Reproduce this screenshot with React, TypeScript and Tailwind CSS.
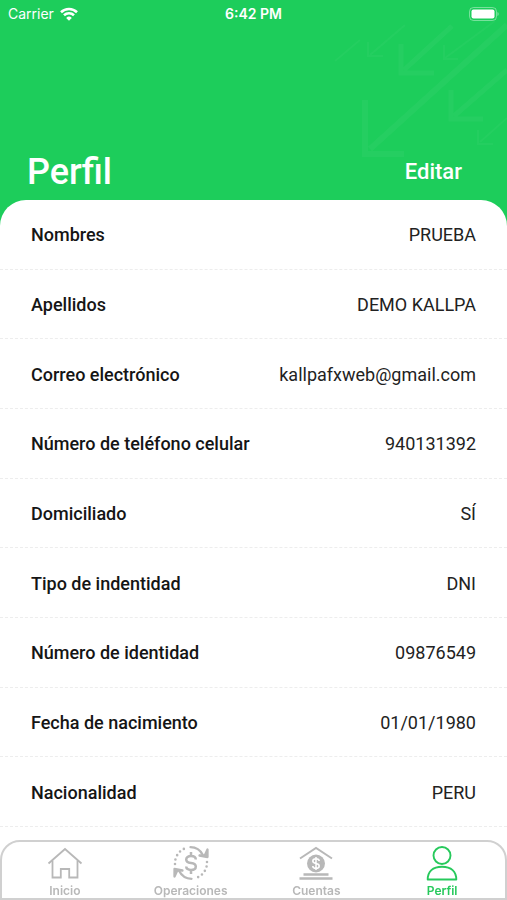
import React from 'react';

const fields = [
  { label: 'Nombres', value: 'PRUEBA' },
  { label: 'Apellidos', value: 'DEMO KALLPA' },
  { label: 'Correo electrónico', value: 'kallpafxweb@gmail.com' },
  { label: 'Número de teléfono celular', value: '940131392' },
  { label: 'Domiciliado', value: 'SÍ' },
  { label: 'Tipo de indentidad', value: 'DNI' },
  { label: 'Número de identidad', value: '09876549' },
  { label: 'Fecha de nacimiento', value: '01/01/1980' },
  { label: 'Nacionalidad', value: 'PERU' },
];

function HomeIcon() {
  return (
    <svg viewBox="0 0 36 36" className="w-9 h-9" fill="none" stroke="currentColor" strokeWidth="1.8" aria-hidden="true">
      <path d="M1.500 18.500 18 4l16.500 14.500" />
      <path d="M5.500 15.500V32.500h8.300V24h8.400v8.500h8.300V15.500" />
    </svg>
  );
}

function ExchangeIcon() {
  return (
    <svg viewBox="0 0 36 36" className="w-9 h-9" fill="none" stroke="currentColor" strokeWidth="2.300" strokeLinecap="round" strokeLinejoin="round" aria-hidden="true">
      <path d="M17.500 2.200c5 0 9.800 2.800 12.500 8" />
      <path d="M34.500 4.500v7.500l-8-1.500 5 .5z" fill="currentColor" />
      <path d="M18.500 33.800c-5 0-9.800-2.800-12.500-8" />
      <path d="M1.500 31.500V24l8 1.500-5-.5z" fill="currentColor" />
      <path d="M2 19a16 16 0 0 1 11-16" strokeDasharray="0 4.600" strokeWidth="2.600" />
      <path d="M34 17a16 16 0 0 1-11 16" strokeDasharray="0 4.600" strokeWidth="2.600" />
      <path d="M18 7v4M18 25v4M22.800 14.500c0-2.200-2-3.500-4.800-3.500s-4.800 1.300-4.800 3.500 2 3.200 4.800 3.500 4.800 1.300 4.800 3.500-2 3.500-4.800 3.500-4.800-1.300-4.800-3.500" strokeWidth="2.500" strokeLinecap="butt" />
    </svg>
  );
}

function BankIcon() {
  return (
    <svg viewBox="0 0 36 36" className="w-9 h-9" fill="none" stroke="currentColor" strokeWidth="2" aria-hidden="true">
      <path d="M2 13.500 18 3l16 10.500" />
      <circle cx="18" cy="18.500" r="9" fill="currentColor" stroke="none" />
      <path d="M5.500 29.500h25M1.500 33.500h33" strokeWidth="2.400" />
      <path d="M18 12v13M21.200 16c0-1.500-1.400-2.300-3.200-2.300s-3.200.8-3.200 2.400 1.400 2.100 3.200 2.400 3.200.9 3.200 2.400-1.400 2.400-3.200 2.400-3.200-.9-3.200-2.400" stroke="white" strokeWidth="1.500" />
    </svg>
  );
}

function UserIcon() {
  return (
    <svg viewBox="0 0 36 36" className="w-9 h-9" fill="none" stroke="currentColor" strokeWidth="1.900" aria-hidden="true">
      <circle cx="18" cy="10.500" r="8.500" />
      <path d="M3.700 34.500c0-8 5-12.800 14.300-12.800s14.300 4.800 14.300 12.800z" strokeLinejoin="round" />
    </svg>
  );
}

const tabs = [
  { label: 'Inicio', icon: HomeIcon, active: false },
  { label: 'Operaciones', icon: ExchangeIcon, active: false },
  { label: 'Cuentas', icon: BankIcon, active: false },
  { label: 'Perfil', icon: UserIcon, active: true },
];

function StatusBar() {
  return (
    <div className="relative grid grid-cols-3 items-center h-7 px-2 text-white">
      <div className="flex items-center gap-1.5 font-['Inter',sans-serif] text-sm">
        <span>Carrier</span>
        <svg viewBox="0 0 18 14" className="w-[18px] h-3.5" fill="none" stroke="currentColor" strokeWidth="2.600" aria-hidden="true">
          <path d="M1 5.200a11.500 11.500 0 0 1 16 0" />
          <path d="M4 8.300a7.200 7.200 0 0 1 10 0" />
          <path d="m9 13.800-2.800-2.900a4 4 0 0 1 5.600 0z" fill="currentColor" stroke="none" />
        </svg>
      </div>
      <span className="text-center font-['Inter',sans-serif] text-sm font-semibold">6:42 PM</span>
      <svg viewBox="0 0 30 14" className="w-[30px] h-3.5 justify-self-end" aria-hidden="true">
        <rect x=".5" y=".5" width="27" height="13" rx="4" fill="none" stroke="white" strokeOpacity=".4" />
        <rect x="2.500" y="2.500" width="23" height="9" rx="2" fill="white" />
        <path d="M28.500 5v4c1.500-.7 1.500-3.300 0-4z" fill="white" fillOpacity=".5" />
      </svg>
    </div>
  );
}

function HeaderArrows() {
  return (
    <svg viewBox="0 0 177 145" className="absolute top-5 right-0 w-[177px] h-[145px]" fill="none" stroke="white" aria-hidden="true">
      <path d="M35 80v54h39M40 129 177 5" strokeWidth="6" strokeOpacity=".04" />
      <path d="M71 24v29h33M74 50l48-44" strokeWidth="5" strokeOpacity=".04" />
      <path d="M121 70v29h32M124 96l53-46" strokeWidth="5" strokeOpacity=".04" />
      <g strokeOpacity=".03" strokeWidth="2">
        <path d="M38 22v14h15M40 35l35-30" />
        <path d="M114 25v14h14M115 38l50-37" />
        <path d="M148 110v14h15M150 122l27-24" />
        <path d="m5 41 25-21" />
      </g>
    </svg>
  );
}

export default function App() {
  return (
    <div className="relative flex flex-col min-h-screen bg-[#1dcd5b] font-['Roboto',sans-serif]">
      <header className="relative">
        <HeaderArrows />
        <StatusBar />
        <div className="relative flex items-center justify-between pt-[120px] pb-1 pl-[27px] pr-[45px] text-white">
          <h1 className="text-4xl leading-[48px] font-medium">Perfil</h1>
          <button type="button" className="text-[22px] leading-6 font-medium">Editar</button>
        </div>
      </header>

      <main className="flex flex-col flex-1 bg-white rounded-t-[26px] pb-[73px]">
        <dl className="flex flex-col flex-1">
          {fields.map((field) => (
            <div
              key={field.label}
              className="flex flex-1 items-center justify-between gap-4 pt-0.5 px-[31px] border-b border-dashed border-[#ededed] text-lg leading-6"
            >
              <dt className="font-medium text-[#151515]">{field.label}</dt>
              <dd className="text-[#222222]">{field.value}</dd>
            </div>
          ))}
        </dl>
      </main>

      <nav className="fixed bottom-0 inset-x-0 grid grid-cols-4 h-[60px] bg-white border-2 border-[#d0d0d0] rounded-t-[20px]">
        {tabs.map((tab) => (
          <a
            key={tab.label}
            href="#"
            aria-current={tab.active ? 'page' : undefined}
            className={`flex flex-col items-center pt-[3px] font-['Inter',sans-serif] text-xs leading-5 font-semibold ${tab.active ? 'text-[#27c95c]' : 'text-[#b8b8b8]'}`}
          >
            <tab.icon />
            <span>{tab.label}</span>
          </a>
        ))}
      </nav>
    </div>
  );
}
